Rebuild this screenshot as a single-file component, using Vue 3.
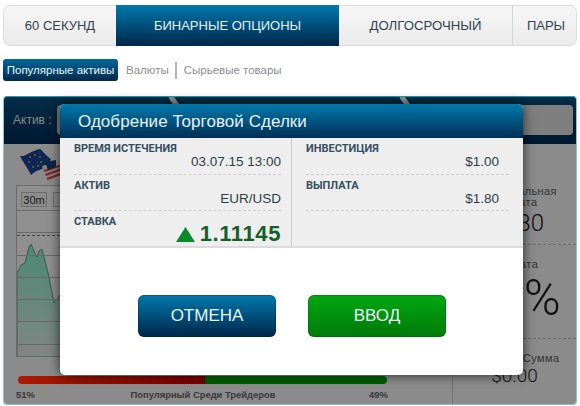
<script setup>
const tabs = [
  { label: '60 СЕКУНД', cls: 'w1' },
  { label: 'БИНАРНЫЕ ОПЦИОНЫ', cls: 'w2 active' },
  { label: 'ДОЛГОСРОЧНЫЙ', cls: 'w3' },
  { label: 'ПАРЫ', cls: 'w4' },
]
const gridLines = [0, 1, 2, 3, 4, 5, 6]
</script>

<template>
  <div class="page">
    <nav class="tabs">
      <div v-for="t in tabs" :key="t.label" class="tab" :class="t.cls">{{ t.label }}</div>
    </nav>
    <div class="subtabs">
      <span class="pill">Популярные активы</span>
      <span class="sub">Валюты</span>
      <span class="sep"></span>
      <span class="sub">Сырьевые товары</span>
    </div>
    <section class="panel">
      <header class="panel-head">
        <span class="asset-label">Актив :</span>
        <div class="asset-field"></div>
        <i class="streak s1"></i>
        <i class="streak s2"></i>
      </header>
      <div class="panel-body">
        <div class="left">
          <svg class="flags" width="42" height="34" viewBox="0 0 42 34">
            <path d="M0 7 C6 8 10 2 20 0 C22 1 26 7 31 10 C28 17 24 19 22 20 C18 21 14 23 11 26 C8 20 3 13 0 7 Z" fill="#1a4698"/>
            <g fill="#c8b545"><circle cx="10" cy="8" r="1"/><circle cx="15" cy="6" r="1"/><circle cx="20" cy="8" r="1"/><circle cx="9" cy="13" r="1"/><circle cx="21" cy="13" r="1"/><circle cx="13" cy="18" r="1"/><circle cx="18" cy="17" r="1"/></g>
            <path d="M22 17 L42 11 V26 L28 33 C26 28 24 22 22 17 Z" fill="#f0e8e8"/>
            <path d="M24 22 L42 16 M25.5 26 L42 20 M27 30 L42 24.5" stroke="#d8443e" stroke-width="2.2"/>
            <path d="M25 13 L36 11 L36 18 L28 21 Z" fill="#1d3c78"/>
          </svg>
          <div class="chart">
            <div class="chips"><span class="chip">30m</span><span class="chip blank"></span></div>
            <div class="plot">
              <svg class="area" width="50" height="116" viewBox="0 0 50 116">
                <defs>
                  <linearGradient id="areaFill" x1="0" y1="0" x2="0" y2="1">
                    <stop offset="0" stop-color="#86f2cc"/>
                    <stop offset="1" stop-color="#e4ebe8"/>
                  </linearGradient>
                </defs>
                <path d="M0 116 V32 L4 24 L8 22 L12 6 L14 3 L17 10 L20 16 L22 10 L25 8 L28 20 L31 32 L35 52 L37 62 L40 58 L43 54 L46 60 L50 62 V116 Z" fill="url(#areaFill)" stroke="#5f9d88"/>
              </svg>
              <div v-for="g in gridLines" :key="g" class="gline"></div>
              <div class="price-line"></div>
            </div>
          </div>
          <div class="bar"><div class="bar-red"></div><div class="bar-green"></div></div>
          <div class="bar-labels"><span>51%</span><span class="mid">Популярный Среди Трейдеров</span><span>49%</span></div>
        </div>
        <aside class="right">
          <div class="stat s-a"><div class="stat-label">Потенциальная<br>выплата</div><div class="stat-num n1">$1.80</div></div>
          <div class="stat s-b"><div class="stat-label">Выплата</div><div class="stat-num n2">80%</div></div>
          <div class="stat s-c"><div class="stat-label">Итоговая Сумма</div><div class="stat-num n3">$0.00</div></div>
        </aside>
      </div>
      <div class="dim"></div>
    </section>

    <div class="modal">
      <h2 class="modal-title">Одобрение Торговой Сделки</h2>
      <div class="info">
        <div class="col">
          <div class="cell"><div class="k">ВРЕМЯ ИСТЕЧЕНИЯ</div><div class="v">03.07.15 13:00</div></div>
          <div class="cell"><div class="k">АКТИВ</div><div class="v">EUR/USD</div></div>
          <div class="cell plain"><div class="k">СТАВКА</div><div class="v rate"><svg width="19" height="15" viewBox="0 0 19 15"><path d="M9.5 0 L19 15 H0 Z" fill="#0a8a2a"/></svg><span>1.11145</span></div></div>
        </div>
        <div class="col second">
          <div class="cell"><div class="k">ИНВЕСТИЦИЯ</div><div class="v">$1.00</div></div>
          <div class="cell"><div class="k">ВЫПЛАТА</div><div class="v">$1.80</div></div>
          <div class="cell plain"></div>
        </div>
      </div>
      <div class="actions">
        <button class="btn cancel">ОТМЕНА</button>
        <button class="btn ok">ВВОД</button>
      </div>
    </div>
  </div>
</template>

<style>
html, body { margin: 0; background: #fff; }
</style>

<style scoped>
.page {
  position: relative;
  width: 580px;
  height: 406px;
  overflow: hidden;
  background: #fff;
  padding: 5px 3px 2px;
  box-sizing: border-box;
  font-family: "Liberation Sans", Arial, sans-serif;
}
.tabs {
  display: flex;
  height: 41px;
  box-sizing: border-box;
  border: 1px solid #dcdcdc;
  border-radius: 7px;
  background: linear-gradient(#f7f6f6, #ebebeb);
}
.tab {
  display: flex;
  align-items: center;
  justify-content: center;
  font-size: 13px;
  color: #2f4250;
  box-sizing: border-box;
}
.w1 { width: 112px; }
.w2 { width: 223px; }
.w3 { width: 174px; border-right: 1px solid #d4d4d4; font-size: 13.2px; }
.w4 { flex: 1; padding-left: 3px; }
.active {
  margin: -1px 0;
  background: linear-gradient(#0079ab, #00264a);
  color: #e6f2f7;
}
.subtabs {
  display: flex;
  align-items: center;
  margin-top: 13px;
  height: 22px;
  font-size: 11.5px;
  color: #8a8f92;
}
.pill {
  width: 115px;
  height: 22px;
  line-height: 22px;
  text-align: center;
  color: #eaf4f8;
  border-radius: 3px;
  background: linear-gradient(#00699a, #00284c);
  font-size: 11.5px;
  margin-right: 8px;
}
.sep {
  width: 2px;
  height: 17px;
  background: #b5b5b5;
  margin: 0 7px 0 6px;
}
.panel {
  position: relative;
  margin-top: 15px;
  height: 309px;
  box-sizing: border-box;
  border: 1px solid #7fc9d2;
  border-top-color: #18a0b8;
  border-radius: 4px;
  overflow: hidden;
  background: #fff;
}
.panel-head {
  position: relative;
  height: 47px;
  display: flex;
  align-items: flex-start;
  padding: 8px 3px 0 9px;
  box-sizing: border-box;
  background: linear-gradient(#06507e, #002a55);
  overflow: hidden;
}
.asset-label { color: #e8e8e8; font-size: 12px; line-height: 30px; width: 44px; }
.asset-field { flex: 1; height: 30px; background: #e0e0e0; border-radius: 4px; }
.streak { position: absolute; top: -2px; width: 5px; height: 14px; background: #fff; transform: rotate(-35deg); }
.s1 { left: 168px; }
.s2 { left: 399px; }
.panel-body { display: flex; height: 260px; background: #f4f4f4; }
.left { width: 448px; padding: 5px 0 0 12px; box-sizing: border-box; }
.flags { display: block; margin: 0 0 2px 4px; }
.chart {
  width: 430px;
  height: 172px;
  box-sizing: border-box;
  border: 1px solid #bdbdbd;
  background: #fbfbfb;
}
.chips { display: flex; gap: 6px; padding: 6px 0 0 4px; height: 24px; box-sizing: border-box; }
.chip { width: 26px; height: 15px; line-height: 14px; text-align: center; font-size: 11px; color: #333; border: 1px solid #c4c4c4; background: #f6f6f6; box-sizing: border-box; }
.blank { width: 14px; }
.plot { position: relative; height: 146px; overflow: hidden; border-top: 1px solid #c2c2c2; }
.area { position: absolute; left: 0; bottom: 0; }
.gline { position: relative; height: 22.3px; box-sizing: border-box; border-bottom: 1px solid #b8b8b8; }
.price-line { position: absolute; left: 0; right: 0; top: 24px; border-top: 1px dashed #777; }
.bar {
  position: relative;
  z-index: 2;
  margin: 19px 0 0 2px;
  width: 369px;
  height: 8px;
  display: flex;
  border-radius: 4px;
  overflow: hidden;
}
.bar-red { width: 187px; background: linear-gradient(90deg, #ac1a00, #750000); }
.bar-green { flex: 1; background: linear-gradient(#006400, #005a00); }
.bar-labels {
  width: 372px;
  margin-top: 5px;
  display: flex;
  justify-content: space-between;
  font-size: 9.5px;
  font-weight: bold;
  color: #666;
}
.bar-labels .mid { margin-left: 2px; font-size: 9.4px; }
.right { flex: 1; border-left: 1px solid #ccc; box-sizing: border-box; text-align: center; }
.stat { box-sizing: border-box; font-size: 11px; color: #5a5a5a; letter-spacing: 0.4px; }
.s-a { height: 101px; padding-top: 42px; border-bottom: 1px dashed #bbb; }
.s-b { height: 94px; padding-top: 14px; border-bottom: 1px dashed #bbb; }
.s-c { padding-top: 14px; }
.stat-label { line-height: 11px; white-space: nowrap; }
.stat-num { color: #1d1d1d; line-height: 1; font-family: Roboto, "Liberation Sans", sans-serif; font-weight: 300; letter-spacing: 0; white-space: nowrap; }
.n1 { font-size: 24px; margin-top: 3px; }
.n2 { font-size: 50px; margin-top: 3px; }
.n3 { font-size: 19px; margin-top: 2px; }
.dim {
  position: absolute;
  inset: 0;
  z-index: 1;
  background: rgba(0, 0, 0, 0.43);
}
.modal {
  position: absolute;
  z-index: 3;
  left: 60px;
  top: 104px;
  width: 463px;
  height: 271px;
  background: #fff;
  border-radius: 5px;
  overflow: hidden;
  box-shadow: 0 0 12px rgba(0, 0, 0, 0.7);
}
.modal-title {
  margin: 0;
  height: 34px;
  line-height: 35px;
  padding-left: 18px;
  font-size: 17px;
  font-weight: normal;
  letter-spacing: 0.05px;
  color: #e8f3f7;
  background: linear-gradient(#0079ab, #002f55);
}
.info {
  display: flex;
  height: 110px;
  box-sizing: border-box;
  background: #eeeeee;
  border-bottom: 2px solid #dcdcdc;
}
.col { width: 232px; box-sizing: border-box; padding: 0 10px 0 14px; border-right: 1px solid #c9c9c9; }
.col.second { flex: 1; padding: 0 14px 0 14px; border: 0; }
.cell { height: 36.5px; box-sizing: border-box; padding-top: 5px; border-bottom: 1px dashed #cfcfcf; }
.cell.plain { border: 0; }
.k {
  font-family: Roboto, "Liberation Sans", sans-serif;
  font-size: 11px;
  font-weight: bold;
  line-height: 11px;
  color: #33505f;
}
.v {
  text-align: right;
  font-size: 13.5px;
  line-height: 15px;
  color: #2c3e48;
}
.col.second .v { padding-right: 10px; }
.rate {
  display: flex;
  justify-content: flex-end;
  align-items: center;
  gap: 5px;
  margin-top: -4px;
  color: #14602a;
  font-size: 22px;
  font-weight: bold;
  line-height: 22px;
  letter-spacing: 0.6px;
}
.actions {
  display: flex;
  gap: 32px;
  padding: 47px 0 0 78px;
}
.btn {
  width: 138px;
  height: 42px;
  border: 0;
  border-radius: 6px;
  font-family: "Liberation Sans", Arial, sans-serif;
  font-size: 17px;
  color: #e9f6fa;
  padding: 0;
}
.cancel { background: linear-gradient(#0079ad, #00264a); box-shadow: inset 0 0 0 1px rgba(0,30,60,.3); }
.ok { background: linear-gradient(#00a810, #007a0a); box-shadow: inset 0 0 0 1px rgba(0,80,0,.3); }
</style>
